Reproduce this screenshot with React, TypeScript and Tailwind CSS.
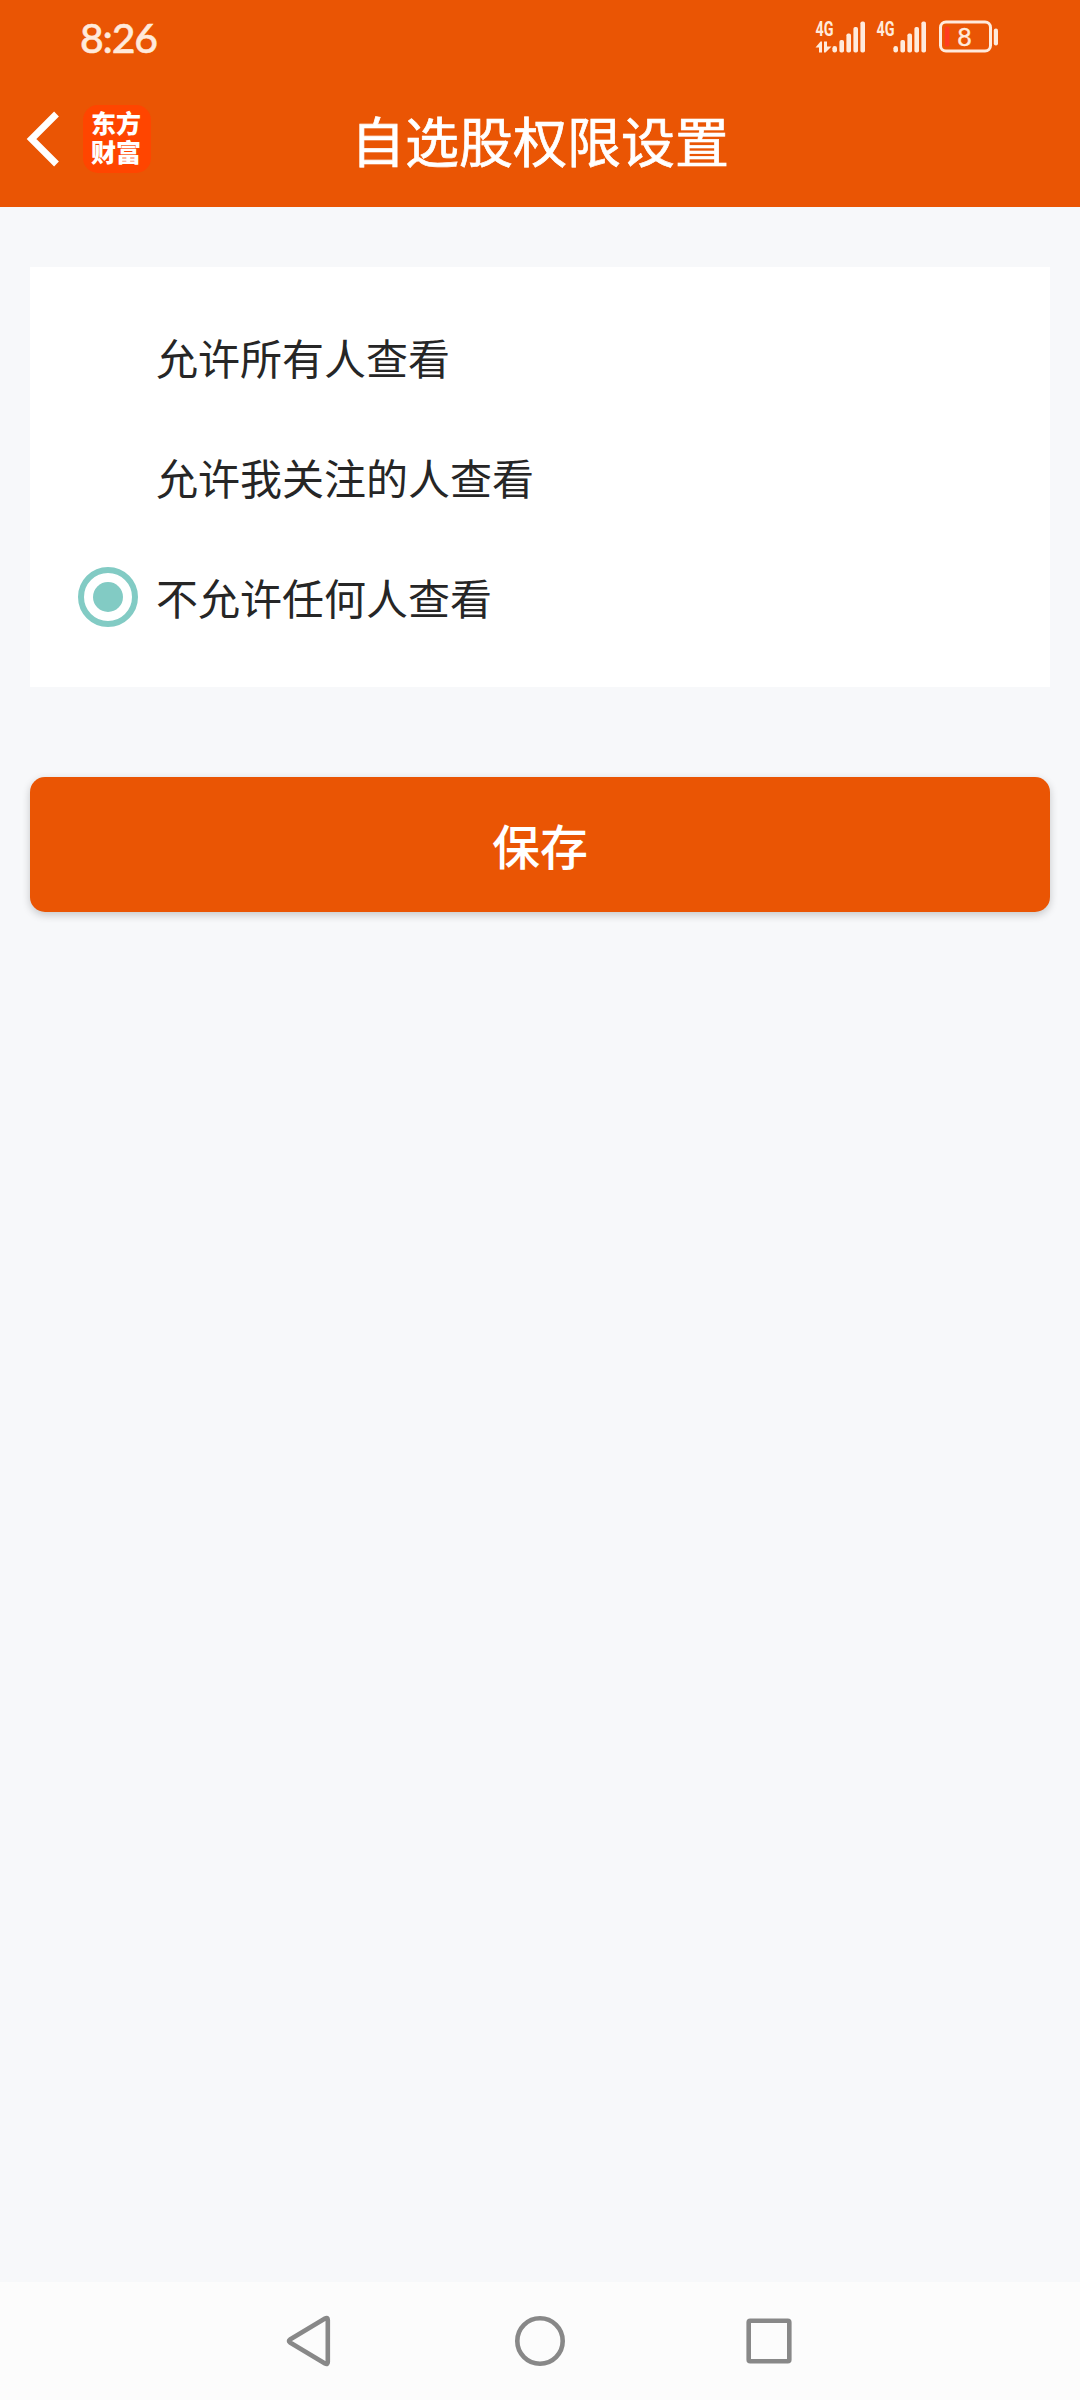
import React from 'react';

const OPTIONS = [
  { id: 'all', label: '允许所有人查看' },
  { id: 'following', label: '允许我关注的人查看' },
  { id: 'none', label: '不允许任何人查看' },
];

const Signal: React.FC<{ data?: boolean }> = ({ data }) => (
  <svg width="54" height="48" viewBox="0 -6 54 48" fill="#ffeadc">
    <text x="1.5" y="17.2" fontSize="20" fontWeight="700" textLength="18" lengthAdjust="spacingAndGlyphs" className="font-['Roboto',sans-serif]">4G</text>
    {data && (
      <>
        <path d="M1.5 28.5 6.500 22.500H8V33.500H5v-5z" />
        <path d="M10 22.500H13v5h4.500L11.500 33.500H10z" />
      </>
    )}
    <rect x="18.4" y="27" width="4.6" height="6.5" rx="2.2" />
    <rect x="25.4" y="21" width="4.6" height="12.5" rx="1.8" />
    <rect x="32.4" y="14.5" width="4.6" height="19" rx="1.8" />
    <rect x="39.4" y="8" width="4.6" height="25.5" rx="1.8" />
    <rect x="46.4" y="2.5" width="4.6" height="31" rx="1.8" />
  </svg>
);

const Battery: React.FC = () => (
  <svg width="60" height="36" viewBox="0 0 60 36">
    <rect x="1.5" y="3" width="50" height="29" rx="5.5" fill="none" stroke="#ffeadc" strokeWidth="3" />
    <rect x="5.8" y="7.5" width="4.6" height="20" rx="1.5" fill="#ff3b20" />
    <rect x="54.8" y="9.5" width="4.2" height="17" rx="2" fill="#ffeadc" />
    <text x="25.500" y="26.5" textAnchor="middle" fontSize="25" fill="#ffeadc" stroke="#ffeadc" strokeWidth="0.4" className="font-['Lato',sans-serif]">8</text>
  </svg>
);

const Header: React.FC = () => (
  <header className="h-[207px] bg-[#ea5504]">
    {/* Status bar */}
    <div className="flex h-[76px] items-center justify-between pl-[80px] pr-[81px]">
      <span className="pb-0.5 font-['Lato',sans-serif] text-[41px] font-medium leading-none tracking-[-1.2px] text-[#ffeadc] [-webkit-text-stroke:0.5px_#ffeadc]">8:26</span>
      <div className="flex items-center pb-[3px]">
        <Signal data />
        <span className="w-[7px]" />
        <Signal />
        <span className="w-[10px]" />
        <Battery />
      </div>
    </div>

    {/* Title bar */}
    <div className="grid h-[131px] grid-cols-[300px_1fr_300px] items-center">
      <div className="flex items-center pb-[5px] pl-[25px]">
        <svg width="36" height="60" viewBox="0 0 36 60" fill="none" stroke="#fff" strokeWidth="6.8">
          <path d="M31.5 5 6.5 30 31.5 55" />
        </svg>
        <div className="ml-[22px] flex h-[68px] w-[68px] flex-col items-center justify-center rounded-[15px] bg-[#ff4500] pb-1 pr-0.5 text-[25px] font-black leading-[29px] text-white">
          <span>东方</span>
          <span>财富</span>
        </div>
      </div>
      <h1 className="pb-1 text-center text-[54px] leading-none text-white [-webkit-text-stroke:0.7px_#fff]">自选股权限设置</h1>
    </div>
  </header>
);

const NavBar: React.FC = () => (
  <nav className="flex h-[118px] items-center justify-center gap-[176px] bg-[#fcfcfc]">
    <svg width="54" height="54" viewBox="0 0 54 54" fill="none" stroke="#888" strokeWidth="4.6" strokeLinejoin="round">
      <path d="M42 4.5Q44.8 3 44.8 6v42q0 3-2.8 1.5L7 28.5q-2-1.5 0-3z" />
    </svg>
    <svg width="54" height="54" viewBox="0 0 54 54" fill="none" stroke="#888" strokeWidth="4.6">
      <circle cx="27" cy="27" r="22.7" />
    </svg>
    <svg width="54" height="54" viewBox="0 0 54 54" fill="none" stroke="#888" strokeWidth="4.6">
      <rect x="5.7" y="6.7" width="40.6" height="40.6" rx="1.5" />
    </svg>
  </nav>
);

export default function App() {
  const [selected, setSelected] = React.useState('none');

  return (
    <div className="flex h-[2400px] w-[1080px] flex-col bg-[#f7f8fa] font-['Noto_Sans_CJK_SC',sans-serif]">
      <Header />

      <main className="flex-1 px-[30px] pt-[60px]">
        <ul className="bg-white px-12 py-[30px]">
          {OPTIONS.map((option) => (
            <li key={option.id} className="flex h-[120px] items-center gap-[18px]" onClick={() => setSelected(option.id)}>
              <span className="flex h-[60px] w-[60px] items-center justify-center">
                {selected === option.id && (
                  <span className="flex h-full w-full items-center justify-center rounded-full border-[6px] border-[#82cbc4]">
                    <span className="h-[30px] w-[30px] rounded-full bg-[#82cbc4]" />
                  </span>
                )}
              </span>
              <span className="pb-px text-[42px] leading-none text-[#262626]">{option.label}</span>
            </li>
          ))}
        </ul>

        <button className="mt-[90px] h-[135px] w-full rounded-[15px] bg-[#ea5504] pb-0.5 text-[48px] font-medium leading-none text-white shadow-[0_3px_9px_rgba(0,0,0,0.2)]">
          保存
        </button>
      </main>

      <NavBar />
    </div>
  );
}
